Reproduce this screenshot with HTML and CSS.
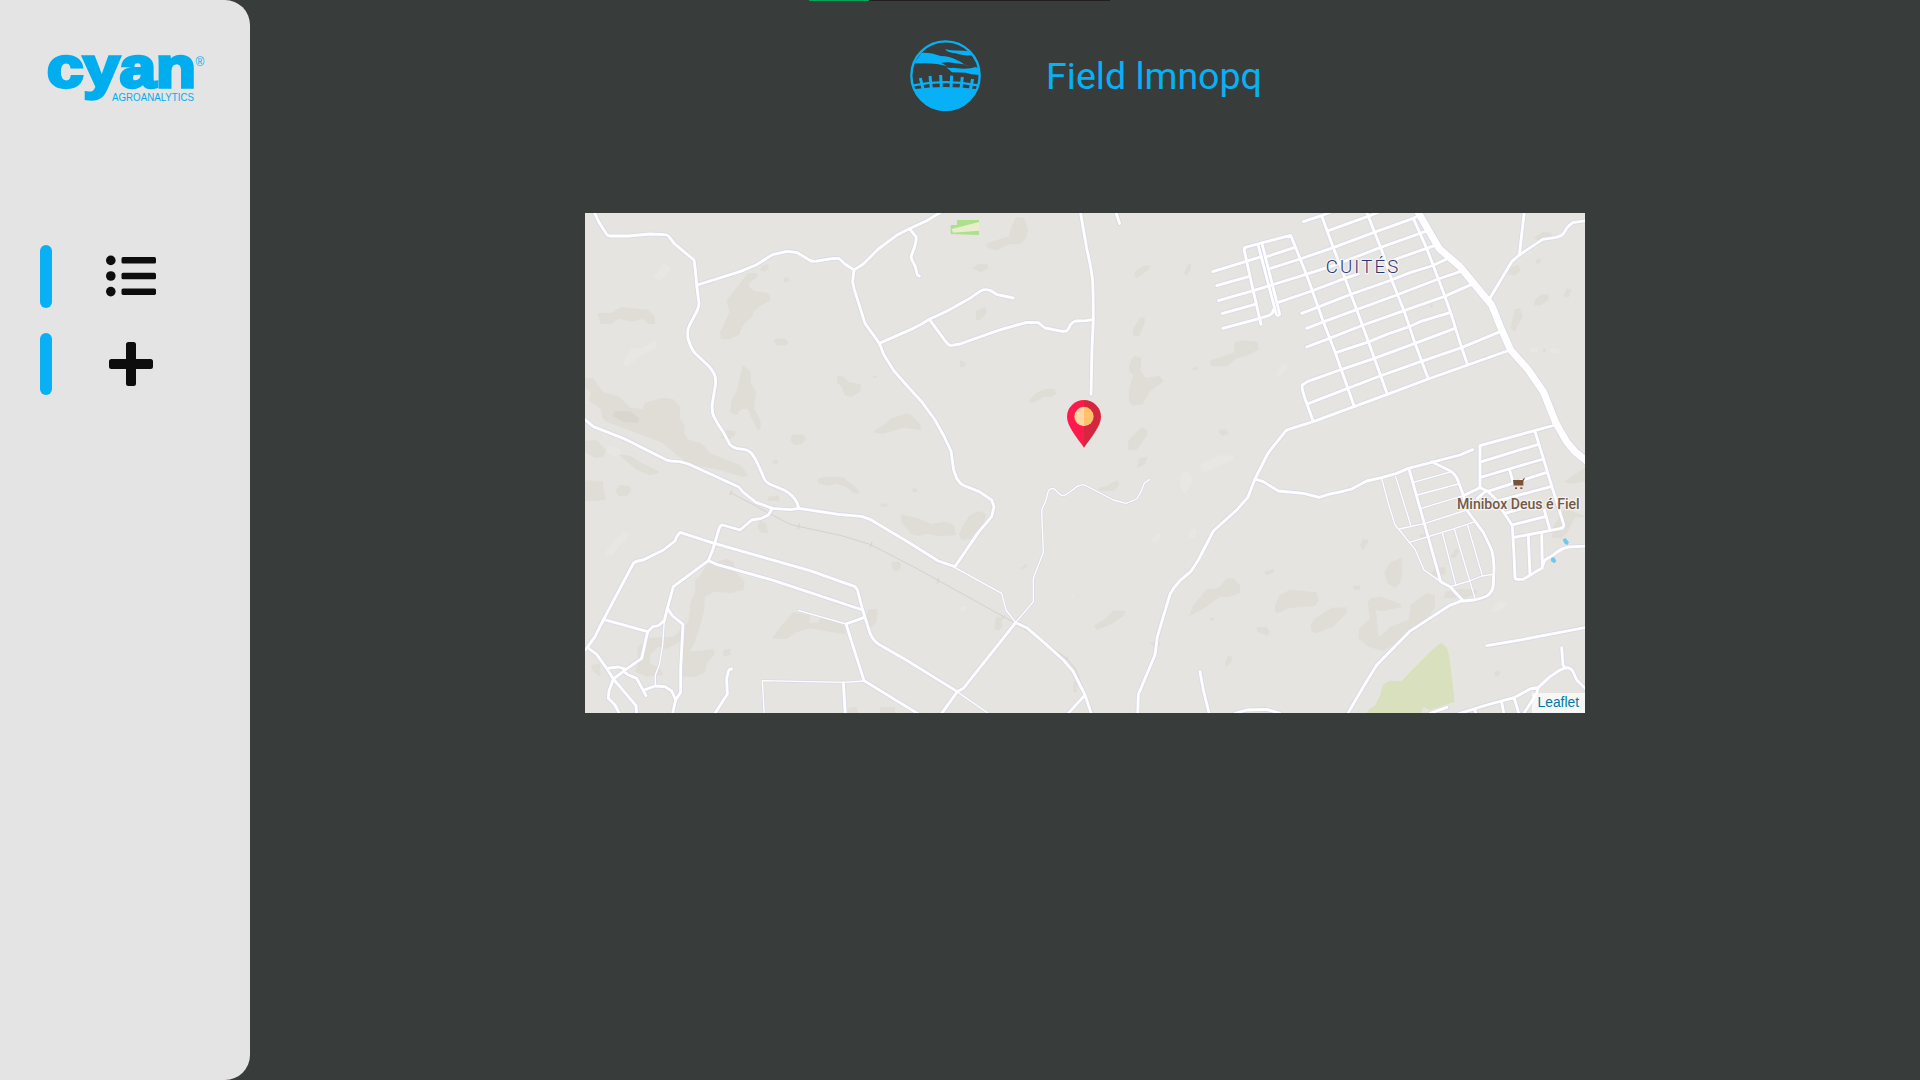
FILE: index.html
```html
<!DOCTYPE html>
<html lang="en">
<head>
<meta charset="utf-8">
<title>Cyan Agroanalytics</title>
<link rel="stylesheet" href="styles.css">
</head>
<body>
<div class="progress"><div class="progress-value"></div></div>
<div class="app">
  <aside class="sidebar">
    <svg class="logo" viewBox="0 0 160 52" role="img" aria-label="cyan agroanalytics">
      <text class="logo-name" x="1" y="35" textLength="149" lengthAdjust="spacingAndGlyphs">cyan</text>
      <text class="logo-sub" x="66" y="48.7" textLength="82" lengthAdjust="spacingAndGlyphs">AGROANALYTICS</text>
      <text class="logo-mark" x="149.4" y="13.500">®</text>
    </svg>
    <nav class="menu">
      <a class="menu-item">
        <svg class="menu-icon" viewBox="0 0 50 50">
          <circle cx="4.8" cy="9.4" r="4.8"/><circle cx="4.8" cy="25" r="4.8"/><circle cx="4.8" cy="40.6" r="4.8"/>
          <rect x="15.5" y="6.1" width="34.5" height="6.5" rx="1.6"/><rect x="15.5" y="21.8" width="34.5" height="6.5" rx="1.6"/><rect x="15.5" y="37.4" width="34.5" height="6.5" rx="1.6"/>
        </svg>
      </a>
      <a class="menu-item">
        <svg class="menu-icon" viewBox="0 0 50 50">
          <path d="M22.500 3h5a2.500 2.500 0 0 1 2.500 2.500V20h14.500a2.500 2.500 0 0 1 2.500 2.500v5a2.500 2.500 0 0 1-2.500 2.500H30v14.500a2.500 2.500 0 0 1-2.500 2.500h-5a2.500 2.500 0 0 1-2.500-2.500V30H5.500a2.500 2.500 0 0 1-2.500-2.500v-5a2.500 2.500 0 0 1 2.500-2.500H20V5.500a2.500 2.500 0 0 1 2.500-2.500z"/>
        </svg>
      </a>
    </nav>
  </aside>
  <main class="content">
    <header class="heading">
      <svg class="field-icon" viewBox="390 120 213 213">
        <circle class="line" cx="496.500" cy="226.500" r="102.500" stroke-width="7"/>
        <path d="M403 190L425 158Q455 157 482 168Q508 168 530 180Q548 187 554 195L595 203L601 224Q575 226 558 218L516 217Q508 210 499 202Q512 206 516 203L550 206Q574 206 585 202L546 192L505 187L483 188L501 198Q470 190 440 190Z"/>
        <path d="M496 147Q506 152 550 152L566 154L580 166Q545 168 528 160Q498 157 496 147Z"/>
        <path d="M400 268Q496 254 593 268A104 104 0 0 1 400 268Z"/>
        <path class="line" stroke-width="7" d="M401 256Q497 237 593 256"/>
        <path class="line" stroke-width="9" d="M421 234L429 267M450 228L454 265M482 225L484 263M515 227L513 263M547 231L543 265M578 237L571 268"/>
      </svg>
      <h1 class="title">Field lmnopq</h1>
    </header>
    <section class="map">
      <svg class="map-canvas" viewBox="0 0 3000 1500">
        <defs>
          <g id="streets">
            <g transform="translate(-15 -24)">
              <path d="M42 20L57 52L80 88Q83 93 90 93H145L210 87L255 89Q264 90 268 96L282 115L342 165Q346 190 350 240L357 295Q356 308 351 318L328 362Q323 372 323 385L324 400Q330 425 345 445L385 482Q402 500 406 517L407 535L396 603L398 625Q402 640 430 682L445 710Q450 725 470 730L495 734Q512 739 518 750Q530 765 553 822Q557 832 575 840L612 855Q640 870 652 895L656 910"/>
              <path d="M352 240L480 200L528 180L578 149L622 139L652 143L688 165Q695 170 705 169L760 160L778 161L795 177L822 195L850 177L895 132L950 91L988 71L1040 47L1085 20"/>
              <path d="M988 71L1008 95Q1011 100 1004 125L993 155L996 165L1006 185L1012 210L1018 213"/>
              <path d="M822 195L818 230L822 250L855 355L898 415L912 450L942 498L990 552L1025 590L1065 645L1090 690L1113 738L1121 795L1130 820L1142 836L1155 843L1198 860L1235 885L1242 905L1235 935L1195 982L1125 1085"/>
              <path d="M898 415L1000 370L1025 357L1048 343L1100 319L1165 283L1200 259Q1212 251 1230 256L1252 269L1300 279"/>
              <path d="M1048 343L1095 407Q1105 421 1113 422L1140 417L1255 376L1340 352L1375 353L1395 369L1448 379L1460 378Q1467 370 1472 358Q1480 350 1487 348L1520 347L1540 343"/>
            </g>
            <g transform="translate(975 -24)">
              <path d="M511 20L530 130L540 175L548 225Q550 280 550 343L546 430L543 568M617 20L629 56"/>
            </g>
            <g transform="translate(1845 -24)">
              <path d="M38 200L185 155M200 155L285 127M50 242L148 214M212 190L300 162L400 128L522 82L640 40L655 33M55 287L160 257L215 240L318 208L400 182L540 128L680 78M66 326L165 298M68 370L180 340L208 331Q220 325 219 315M235 292L335 258L435 220L475 207M585 163L680 130L703 122"/>
              <path d="M183 358L158 250L133 137Q131 128 140 126L272 91L320 210L370 350L405 440L462 603"/>
              <path d="M175 122L228 325Q230 332 236 331Q240 329 238 322L187 120"/>
              <path d="M310 50L365 32L395 20M385 77L502 35L540 20M305 325L352 307L455 267L575 225L630 203L695 183L740 162M320 370L372 350L590 270L715 222L780 200M320 426L388 400L490 360L612 317L732 275L815 238M408 443L508 410L560 388L628 365L660 350L750 323"/>
              <path d="M340 650L322 600Q303 550 307 540L322 530L423 494L523 460L645 415L765 370M325 596L443 550L540 513L662 470L785 428L900 380M930 435L803 480L685 522L562 568L462 605L340 650"/>
              <path d="M365 32L400 128L435 220L487 360L523 460L562 568M500 22L545 135L575 225L612 317L645 415L685 522M640 40L680 130L715 222L735 275L752 323L785 428L803 480"/>
              <path d="M973 20L958 150M868 283L935 170L958 150L1028 103L1065 98Q1088 92 1092 84Q1102 62 1118 53L1160 47"/>
              <path d="M340 650L265 673Q257 676 253 683L215 730L202 748L165 822L143 878L110 915L40 978L-5 1065L-28 1100L-60 1127Q-80 1147 -90 1168L-128 1295L-135 1350L-185 1468L-187 1530"/>
            </g>
            <g transform="translate(-15 726)">
              <path d="M8 -112L40 -85L130 -50L230 0L260 15Q270 19 300 20L325 27L475 95L490 112L528 142L577 160L630 164L656 160L775 178L845 184L870 193L990 265L1075 318L1125 335"/>
              <path d="M577 160L565 180L545 190L515 195L480 225L428 210Q420 210 416 225L398 285L385 317L280 395L262 460L253 497L235 512L218 515L203 530L185 610L138 643L100 672L87 708L85 730L105 750L120 780"/>
              <path d="M8 592L22 577L45 545L70 495L160 325Q165 318 190 315L250 285L285 258L290 245L300 232L403 265L690 347L825 395Q832 400 835 415L848 465L870 535Q880 560 900 570L990 622L1132 710L1150 700L1307 503"/>
              <path d="M385 317L410 328L580 376L848 465M853 487L798 507L852 677L1020 780M70 493L203 530M22 577L50 598L80 640L100 672L168 752L170 780M80 640L115 636L138 643M132 650L145 660L170 670L198 722M190 706L225 693L255 695L275 708L287 735L277 780M262 460L278 483L309 508L302 640V712L287 735M455 642Q447 641 445 650L440 670L442 718L405 775M790 682L796 780"/>
              <path d="M1132 710L1083 778M1307 503L1340 518L1395 565L1450 615L1480 650L1515 720L1537 785M1515 720L1462 778M1860 650L1870 705L1888 778"/>
            </g>
            <g transform="translate(1845 726)">
              <path d="M165 72L190 80L235 108L310 115L358 127L385 118L415 112L455 102L500 78L545 68L590 55L625 40L780 0L818 -16"/>
              <path d="M695 20L750 47Q768 60 773 75L790 120L800 165L850 232L875 285Q882 310 882 340L880 390Q878 410 862 422Q850 430 820 435L790 438L750 395L722 380L627 42M788 436L748 452L628 530L530 630L490 695L442 778"/>
              <path d="M840 98V-28L1065 -90M845 20L1015 -32M845 66L1030 12M862 110L1040 52M885 140L1052 95M915 175L1020 146M935 210L1035 185M928 42L940 85M1033 165L1050 225M1005 -70L1030 10L1045 60L1091 208Q1093 219 1080 221L942 247"/>
              <path d="M788 123L840 98L862 108L885 130L900 155L937 212L942 300L945 367Q946 373 952 373H970L1025 340L1035 315L1060 300Q1085 279 1105 276L1160 273M832 130L858 108M985 245L990 358M1025 235L1027 340M860 572L950 557L1160 517"/>
              <path d="M1085 578L1089 630L1096 640M1160 705L1130 675L1118 648Q1111 638 1100 638L1080 645L1050 665L1015 697L990 702L945 727L860 750L770 778M1015 697L1010 715L970 778M905 742L912 778M943 730L957 778M825 765L828 778M690 775L740 757M105 775L140 765L200 763L240 775"/>
            </g>
          </g>
          <g id="lanes">
            <path transform="translate(1845 726)" d="M545 70L565 145L585 210L598 225L645 283L672 345L722 380M587 65L632 210M640 82L755 50M652 120L775 87M663 160L790 122M598 222L675 205L800 165M628 262L685 245L765 220L825 200M727 233L768 392M763 222L825 430M802 208L847 362M752 395L808 378L845 363L880 358"/>
            <path transform="translate(975 726)" d="M135 338L275 415L288 465L317 502L370 440V370L400 292L395 165L408 135L415 108Q423 96 435 103Q450 122 460 122Q470 119 500 95Q517 85 530 93L610 135L648 145L680 132L693 110L703 84L718 74M145 713L235 775"/>
            <path transform="translate(-15 726)" d="M253 497L248 570L238 630L226 660V693M655 466L798 507M553 780L547 677L790 682L852 678"/>
          </g>
          <path id="highway" transform="translate(1845 -24)" d="M650 14L685 75L717 130L780 185L825 240L875 300L905 375L932 435L985 495L1030 560L1068 655L1100 710L1125 740L1175 780"/>
        </defs>

        <g class="land" transform="translate(-15 -24)">
          <path d="M53 324H96L124 306L203 314L225 335V357H207L190 342L154 350L117 341L92 357H62Z"/>
          <path d="M504 204H530L533 212L507 236L508 247L524 258L560 263L570 272V287L542 301L522 320L516 335L488 362L478 389L448 402L422 401L420 380L449 322L440 286ZM546 183L565 178L566 190L554 201L540 194ZM610 218L625 217L630 228L612 231ZM585 402L612 400L626 411L617 421H590L582 411Z"/>
          <path d="M488 480L512 500V532L528 562L522 610L542 650L541 672L533 676L502 612H485L470 630L450 622L455 585L472 552ZM772 513L788 514L806 531L843 538L840 560L812 576L794 570L786 547L770 532ZM882 678L912 660L935 640L980 625L995 630L1022 660V676L970 668L910 686L884 684ZM877 512H890L892 518L880 519ZM636 690L668 687L678 702L666 718L642 721L631 706ZM440 676L465 677L467 687L444 708L420 698Z"/>
          <path d="M15 519H38L70 562L115 574L152 608L186 612L197 592L250 578L280 583L300 606V640L312 660L314 687L326 704L366 716L390 745L480 780L505 810L490 817L420 795L330 778L290 750L250 715L200 695L80 650L66 638L63 614L27 586L32 562L15 550Z"/>
          <path d="M15 707L50 706L78 735L70 756L45 758L15 742ZM115 748L150 752L180 771L235 798V805L210 811L170 795ZM576 769L593 767V776H578Z"/>
        </g>
        <path class="land-dark" transform="translate(-15 -24)" d="M105 618L150 619L178 640L175 654L130 650L98 632Z"/>
        <g class="land" transform="translate(975 -24)">
          <path d="M318 36L342 39L354 72L348 98L332 117L298 118L258 136L228 127L233 114L296 94L303 68ZM205 178L232 177L235 190L212 202L186 190ZM198 318L228 306V326L210 346L198 344ZM676 198L700 183L720 181L714 196L682 218L674 214ZM832 180L843 174L842 196L829 211L822 206ZM690 338L704 337V353L688 392L672 395L667 376Z"/>
          <path d="M672 452L693 458L692 496L708 519L748 512L761 529L719 560L698 598L670 603L657 590V553L670 510L657 498L658 476ZM900 467L978 440L974 416L992 406L1042 410L1046 433L1010 452L980 460L950 484H902ZM845 490L862 485L866 491L850 497ZM359 584L378 564L405 552H435L439 566L425 575L400 576L372 593L358 592ZM150 466L168 474L162 486H150ZM696 666L712 674L711 692L678 736H653L655 708L680 680ZM688 760L712 756L705 778L680 790ZM930 673L952 674L954 688L935 692L926 682Z"/>
        </g>
        <g class="land" transform="translate(1845 -24)">
          <path d="M105 410L155 410L177 432L140 452L100 450ZM1002 98L1028 81L1055 84V98L1020 112ZM928 188L955 180L963 196L945 212L926 207ZM1003 287L1025 268L1046 268V285L1022 301H1003ZM1100 250L1115 254L1105 278L1089 272ZM945 313L960 310L968 335L945 379L932 370ZM1008 165L1020 158L1022 174L1008 177ZM685 300L700 295L696 310ZM1028 432H1038V440H1028Z"/>
        </g>
        <g class="land" transform="translate(-15 726)">
          <path d="M15 76L68 78L77 134L15 140ZM118 90L150 93L153 108L140 124L115 122L105 107ZM712 72L730 66L790 67L836 105V116L820 113L800 97L770 87L745 92L715 85ZM565 125L598 122L597 138L562 137ZM540 195L558 208L564 234L541 232L532 215ZM962 180L985 182L1022 198V244L990 230L965 205ZM935 322L960 320L963 340L948 350L935 340ZM900 146H920L922 155H903ZM578 17L593 15V24H578ZM998 100L1012 102L1010 111H998Z"/>
          <path d="M380 330L440 312L462 322V345L494 380L490 405L455 414L403 410L375 425L372 470L358 520L345 560L330 590L400 583L405 598L380 625L375 652L345 666L298 664L300 640L310 590L298 560L262 582L235 575L210 600V625L240 640L250 660L200 665L165 650L175 620L172 580L205 548L280 545L325 500L332 440L347 410L345 378L360 362ZM430 585L452 582L450 600L430 605ZM32 632L60 625L62 665L40 650Z"/>
          <path d="M578 545L610 505L640 472L690 480L690 503H715L723 482L800 512L795 538L750 530L690 520L650 532L620 552L580 551ZM865 462L893 463L890 500L865 525L855 495ZM805 758L830 756L835 775H805ZM900 757L945 756V780H900Z"/>
        </g>
        <g class="land" transform="translate(975 726)">
          <path d="M0 184L20 188L65 207L105 200L132 210L138 240L85 244L55 236L20 242L0 236ZM205 168L228 176L222 200L180 252L155 255L147 238L160 210L178 182ZM565 98L590 93L620 76L630 88L612 107L570 108ZM610 466L648 468L640 482L605 508L560 525L552 512L580 495ZM258 485H275L277 515L268 526L252 522ZM332 340L348 326L352 335L332 344ZM490 680H502L500 712H490ZM720 562L750 560V570L732 578ZM955 602L968 606L962 625L948 636L945 622ZM902 486L915 490L908 500L900 494Z"/>
        </g>
        <g class="land" transform="translate(1845 726)">
          <path d="M-33 484L-20 450L20 403L55 400L80 370L100 370L120 390V413L85 427L60 425L20 455ZM225 450L240 420L270 404L350 412L356 435L345 454L300 457L265 460L235 474L225 470ZM332 510L345 490L395 458L440 457V473L400 515L350 535L335 530ZM553 350L570 322L605 309L607 350L600 385L585 398L562 385ZM503 445L510 430L540 425L580 438L603 448V457L550 468L525 466L530 480L533 530L540 545L570 515L625 495L632 450L680 415L705 418V455L690 480L660 505L630 540L570 575L550 588L505 575L475 550L478 520L510 490ZM170 515L200 517L209 530L203 542L172 530ZM192 350L222 342V352L200 361ZM488 252L507 255L490 285L480 272ZM460 393L480 392V404H460ZM738 410L770 402L830 404V418L790 430L730 428ZM705 340L735 335L738 355L715 365L690 360ZM770 278L778 290L765 310L750 305ZM660 238L685 236V248H660ZM1090 80L1160 35V80L1110 86ZM1060 215L1095 160L1160 186V187H1125L1102 232L1085 250L1055 248ZM885 648L902 650L895 665L882 660Z"/>
        </g>
        <g class="land-light">
          <path transform="translate(-15 -24)" d="M248 173L270 186L262 210L240 228L220 215L238 195ZM225 402L232 412L228 430L195 445L165 465L148 482L130 482V468L155 430L190 430ZM82 722L120 732L126 742L110 760L80 740Z"/>
          <path transform="translate(1845 -24)" d="M225 510L245 480L263 476L262 492L240 512ZM990 432L1015 425V442L990 442ZM1050 430L1078 432L1075 447L1050 442ZM0 780L60 750L100 752V765L50 785L10 805Z"/>
          <path transform="translate(-15 726)" d="M75 295L90 270L130 232L150 234L140 255L115 275L100 300H80Z"/>
          <path transform="translate(975 726)" d="M812 55L835 50L847 75L840 95L825 116L810 95ZM722 258L740 237L756 240L745 258L730 266ZM838 230L850 218L862 225L855 248L838 248ZM146 465L160 452L174 458L160 472ZM480 422L492 418L488 432Z"/>
          <path transform="translate(1845 726)" d="M873 465L900 438L922 440L910 462L880 474Z"/>
        </g>
        <path class="park" transform="translate(1845 726)" d="M500 775L508 762L525 752L540 722L550 688L568 677L605 678L660 622L700 582L724 563L740 578L747 600L757 680L764 740L690 765L670 757L660 778Z"/>
        <path class="pitch-edge" transform="translate(975 -24)" d="M122 60H141V45H207V90L122 87Z"/>
        <path class="pitch" transform="translate(975 -24)" d="M125 72L207 51V77L129 83Z"/>

        <path class="rail" transform="translate(-15 726)" d="M452 113L628 207L655 214L785 242L870 268L1000 335L1307 505L1390 560L1460 610L1485 640L1542 778M456 107L450 119M658 207L654 221M876 262L871 276M1076 370L1072 384M1274 482L1266 493M1463 606L1457 616"/>
        <use class="lane-casing" href="#lanes"/>
        <use class="street-casing" href="#streets"/>
        <use class="highway-casing" href="#highway"/>
        <use class="lane" href="#lanes"/>
        <use class="street" href="#streets"/>
        <use class="highway" href="#highway"/>

        <g class="pool" transform="translate(1845 726)">
          <path d="M1088 254L1096 249L1107 262L1102 270L1094 266ZM1053 310L1062 306L1069 318L1063 325L1053 319Z"/>
        </g>
        <g class="cart" transform="translate(1845 726)">
          <path d="M939 75H967L971 70H975L970 79V92H941Z"/>
          <rect class="cart-gap" x="942" y="92" width="27" height="4"/>
          <rect x="945" y="97" width="6" height="5"/><rect x="961" y="97" width="6" height="5"/>
        </g>
        <text class="district" x="2222" y="181" textLength="218">CUITÉS</text>
        <text class="shop" x="2616" y="887" textLength="368" lengthAdjust="spacingAndGlyphs">Minibox Deus é Fiel</text>
        <g transform="translate(975 -24)">
          <path class="pin-left" d="M522 585A51 50 0 0 0 471 635C471 664 501 697 522 728Z"/>
          <path class="pin-right" d="M522 585A51 50 0 0 1 573 635C573 664 543 697 522 728Z"/>
          <path class="dot-left" d="M522 605.500A29 29 0 0 0 522 663.500Z"/>
          <path class="dot-right" d="M522 605.500A29 29 0 0 1 522 663.500Z"/>
        </g>
      </svg>
      <div class="attribution">Leaflet</div>
    </section>
  </main>
</div>
</body>
</html>
```
FILE: styles.css
```css
* {
  box-sizing: border-box;
}

body {
  margin: 0;
  background: #383c3a;
  font-family: Roboto, sans-serif;
  overflow: hidden;
}

/* Loading strip laid over the top edge of the window */
.progress {
  position: absolute;
  top: 0;
  left: 809px;
  width: 301px;
  height: 1px;
  background: #231f20;
}

.progress-value {
  width: 60px;
  height: 1px;
  background: #00a651;
}

.app {
  display: flex;
  height: 100vh;
}

.sidebar {
  width: 250px;
  flex: none;
  padding-top: 52px;
  background: #e4e4e4;
  border-radius: 0 25px 25px 0;
}

.logo {
  display: block;
  width: 160px;
  height: 52px;
  margin-left: 46px;
  overflow: visible;
  fill: #00aeef;
}

.logo-name {
  font: bold 58px "Liberation Sans", sans-serif;
  stroke: #00aeef;
  stroke-width: 3.400px;
}

.logo-sub {
  font: 10.500px "Liberation Sans", sans-serif;
}

.logo-mark {
  font: 12px "Liberation Sans", sans-serif;
}

.menu {
  display: flex;
  flex-direction: column;
  gap: 25px;
  margin-top: 141px;
  padding-left: 40px;
}

.menu-item {
  display: flex;
  align-items: center;
  gap: 54px;
  height: 62.500px;
}

.menu-item::before {
  content: "";
  width: 12px;
  height: 100%;
  border-radius: 6px;
  background: #08b0f5;
}

.menu-icon {
  width: 50px;
  height: 50px;
  fill: #0d0d0d;
}

.content {
  flex: 1;
  display: flex;
  flex-direction: column;
  align-items: center;
}

.heading {
  display: flex;
  align-items: center;
  gap: 65px;
  height: 151px;
  margin-bottom: 62px;
  padding-left: 2px;
}

.field-icon {
  width: 71px;
  height: 71px;
  fill: #08b0f5;
}

.field-icon .line {
  fill: none;
  stroke: #08b0f5;
}

.title {
  margin: 0;
  font-size: 37.500px;
  font-weight: 400;
  color: #08b0f5;
}

.map {
  position: relative;
  width: 1000px;
  height: 500px;
  background: #e5e4e0;
}

.map-canvas {
  display: block;
  width: 100%;
  height: 100%;
}

.land { fill: #dfddd6; }
.land-dark { fill: #d9d6cf; }
.land-light { fill: #e8e7e4; }
.park { fill: #d8e0bd; }
.pitch-edge { fill: #abe08d; }
.pitch { fill: #eaedcb; }
.pool { fill: #6cc9f0; }
.cart { fill: #7a5237; }
.cart-gap { fill: #e6dfda; }

.rail,
.lane,
.lane-casing,
.street,
.street-casing,
.highway,
.highway-casing {
  fill: none;
  stroke-linecap: round;
  stroke-linejoin: round;
}

.rail { stroke: #d3d2cd; stroke-width: 3px; }
.lane { stroke: #fff; stroke-width: 4px; }
.lane-casing { stroke: #d8d9e6; stroke-width: 8px; }
.street { stroke: #fff; stroke-width: 8.500px; }
.street-casing { stroke: #d8d9e6; stroke-width: 13.500px; }
.highway { stroke: #fff; stroke-width: 21px; }
.highway-casing { stroke: #d8d9e6; stroke-width: 26px; }

.district,
.shop {
  font-family: Roboto, sans-serif;
  paint-order: stroke;
  stroke: #f4f3f1;
  stroke-linejoin: round;
}

.district {
  font-size: 56px;
  font-weight: 300;
  stroke-width: 8px;
  fill: #2c3472;
}

.shop {
  font-size: 46px;
  font-weight: 500;
  stroke-width: 8px;
  fill: #735a48;
}

.pin-left { fill: #ff1a4b; }
.pin-right { fill: #d4263f; }
.dot-left { fill: #ffd7a3; }
.dot-right { fill: #ffc16c; }

.attribution {
  position: absolute;
  right: 0;
  bottom: 0;
  padding: 0 6px;
  background: rgba(255, 255, 255, 0.7);
  color: #0078a8;
  font: 13.800px/20px "Liberation Sans", sans-serif;
}
```
